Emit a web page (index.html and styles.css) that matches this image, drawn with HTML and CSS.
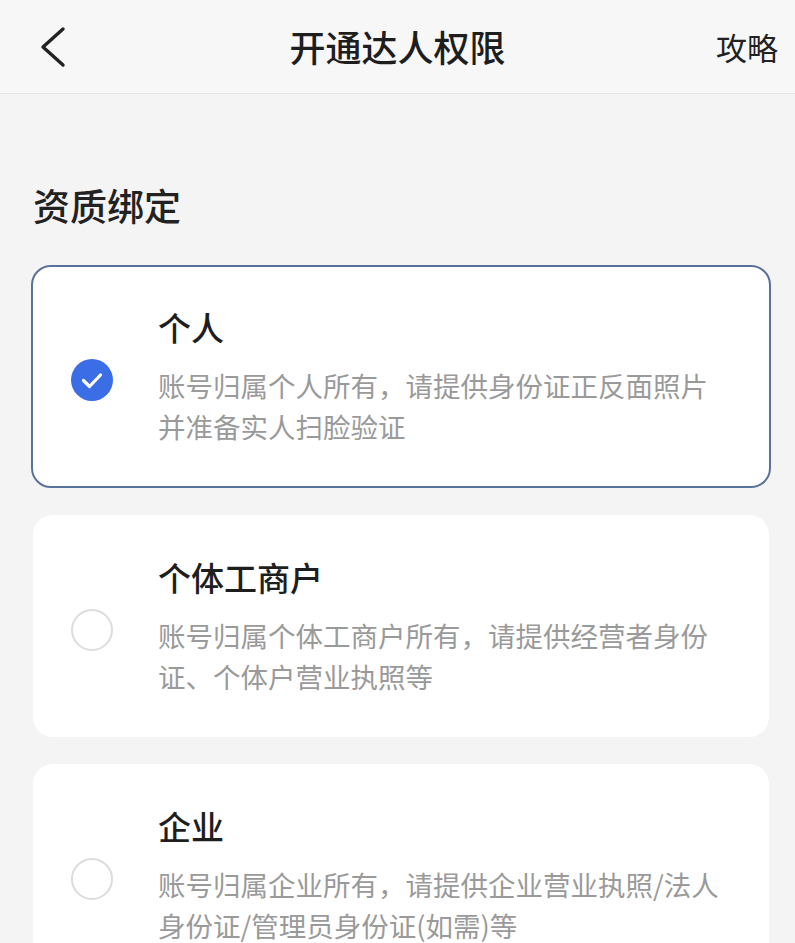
FILE: index.html
```html
<!DOCTYPE html>
<html lang="zh-CN">
<head>
<meta charset="utf-8">
<title>开通达人权限</title>
<link rel="stylesheet" href="styles.css">
</head>
<body>
<header class="nav">
  <button class="nav-back" aria-label="返回">
    <svg width="26" height="42" viewBox="0 0 26 42"><polyline points="23,3 3,21 23,39" fill="none" stroke="#222" stroke-width="3.4" stroke-linecap="round" stroke-linejoin="round"/></svg>
  </button>
  <h1 class="nav-title">开通达人权限</h1>
  <a class="nav-action">攻略</a>
</header>
<main class="content">
  <h2 class="section-title">资质绑定</h2>
  <div class="cards">
    <div class="card selected">
      <span class="radio checked">
        <svg width="42" height="42" viewBox="0 0 42 42"><circle cx="21" cy="21" r="21" fill="#3a6de6"/><polyline points="12.5,21.5 18.5,27.5 29.5,16" fill="none" stroke="#fff" stroke-width="3.2" stroke-linecap="round" stroke-linejoin="round"/></svg>
      </span>
      <div class="card-body">
        <div class="card-title">个人</div>
        <p class="card-desc">账号归属个人所有，请提供身份证正反面照片并准备实人扫脸验证</p>
      </div>
    </div>
    <div class="card">
      <span class="radio"></span>
      <div class="card-body">
        <div class="card-title">个体工商户</div>
        <p class="card-desc">账号归属个体工商户所有，请提供经营者身份证、个体户营业执照等</p>
      </div>
    </div>
    <div class="card">
      <span class="radio"></span>
      <div class="card-body">
        <div class="card-title">企业</div>
        <p class="card-desc">账号归属企业所有，请提供企业营业执照/法人身份证/管理员身份证(如需)等</p>
      </div>
    </div>
  </div>
</main>
</body>
</html>
```

FILE: styles.css
```css
* { box-sizing: border-box; }
html, body {
  margin: 0;
  padding: 0;
  background: #f4f4f4;
  font-family: "Noto Sans CJK SC", "Noto Sans", sans-serif;
  color: #222;
}
.nav {
  height: 94px;
  background: #f7f7f7;
  border-bottom: 1px solid #e6e6e6;
  display: flex;
  align-items: center;
  justify-content: space-between;
  padding: 0 17px 0 40px;
  position: relative;
}
.nav-back {
  border: 0;
  background: none;
  padding: 0;
  width: 26px;
  height: 42px;
  display: flex;
}
.nav-title {
  position: absolute;
  left: 0;
  right: 0;
  text-align: center;
  margin: 0;
  font-size: 36px;
  font-weight: 500;
  line-height: 94px;
  top: -1px;
  color: #1e1e1e;
  pointer-events: none;
}
.nav-action {
  font-size: 31px;
  color: #222;
  line-height: 1;
}
.content {
  padding: 0 0 40px;
}
.section-title {
  margin: 89px 0 38px 33px;
  font-size: 37px;
  line-height: 44px;
  font-weight: 500;
  color: #222;
}
.cards {
  display: flex;
  flex-direction: column;
  gap: 27px;
}
.card {
  margin: 0 26px 0 33px;
  background: #fff;
  border-radius: 20px;
  display: flex;
  align-items: center;
  padding: 42px 42px 40px 38px;
  height: 222px;
}
.card.selected {
  margin: 0 24px 0 31px;
  height: 223px;
  border: 2px solid #5a7299;
  padding: 40px 42px 40px 38px;
}
.radio {
  flex: none;
  width: 42px;
  height: 42px;
  border-radius: 50%;
  border: 2px solid #dcdcdc;
  margin-top: 6px;
  display: block;
}
.radio.checked {
  border: 0;
}
.radio svg { display: block; }
.card-body {
  margin-left: 45px;
  flex: 1;
  min-width: 0;
}
.card-title {
  font-size: 33px;
  line-height: 40px;
  font-weight: 500;
  color: #1e1e1e;
}
.card-desc {
  margin: 18px 0 0;
  font-size: 27.5px;
  line-height: 41px;
  color: #9a9a9a;
}
```
